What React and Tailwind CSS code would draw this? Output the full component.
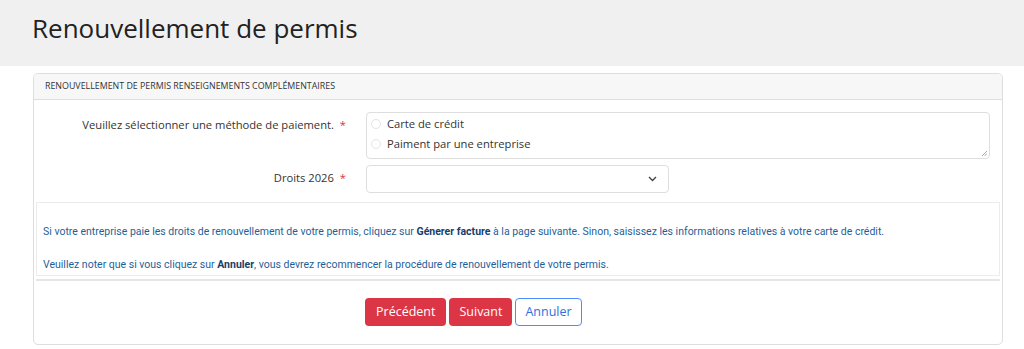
import React from "react";

const P = { fontFamily: '"Open Sans", "DejaVu Sans", sans-serif' };
const R = { fontFamily: 'Roboto, "Liberation Sans", sans-serif' };

export default function App() {
  return (
    <div className="w-[1024px] h-[349px] bg-white overflow-hidden" style={P}>
      <div className="h-[66px] bg-[#f0f0f0] pl-[32px] pt-[10px]">
        <h1 className="text-[26px] leading-[36px] text-[#222]">Renouvellement de permis</h1>
      </div>
      <div className="mx-[33px] mt-[7px] border border-[#dedede] rounded-[5px] w-[970px]">
        <div className="h-[26px] bg-[#f7f7f7] border-b border-[#dedede] pl-[11px] flex items-center rounded-t-[5px]">
          <span className="text-[8.85px] text-[#333] uppercase">Renouvellement de permis renseignements complémentaires</span>
        </div>
        <div className="pt-[12px]">
          <div className="flex">
            <div className="w-[312px] text-right text-[11.2px] text-[#333] pt-[5px]">
              Veuillez sélectionner une méthode de paiement. <span className="text-[#dc3545] ml-[3px]">*</span>
            </div>
            <div className="ml-[20px] w-[624px] h-[47px] border border-[#dedede] rounded-[4px] relative pt-[1px] pl-[4px]">
              <label className="flex items-center h-[20px] text-[11.2px] text-[#333]">
                <span className="w-[10px] h-[10px] rounded-full border border-[#e4e4e4] mr-[6px]"></span>
                Carte de crédit
              </label>
              <label className="flex items-center h-[20px] text-[11.2px] text-[#333]">
                <span className="w-[10px] h-[10px] rounded-full border border-[#e4e4e4] mr-[6px]"></span>
                Paiment par une entreprise
              </label>
              <svg className="absolute right-[2px] bottom-[2px]" width="6" height="6" viewBox="0 0 6 6">
                <path d="M1 6 L6 1 M3.5 6 L6 3.5" stroke="#999" strokeWidth="0.8" />
              </svg>
            </div>
          </div>
          <div className="flex mt-[6px]">
            <div className="w-[312px] text-right text-[11.2px] text-[#333] pt-[5px]">
              Droits 2026 <span className="text-[#dc3545] ml-[3px]">*</span>
            </div>
            <div className="ml-[20px] w-[303px] h-[28px] border border-[#dedede] rounded-[4px] flex items-center justify-end pr-[11px]">
              <svg width="9" height="6" viewBox="0 0 9 6">
                <path d="M1 1 L4.5 4.5 L8 1" stroke="#444" strokeWidth="1.4" fill="none" />
              </svg>
            </div>
          </div>
          <div className="mx-[2px] mt-[9px] border border-[#ececec] h-[74px] pl-[6px] text-[#1f5f99] text-[10.5px]" style={R}>
            <p className="mt-[21px]">Si votre entreprise paie les droits de renouvellement de votre permis, cliquez sur <b className="text-[#173e6b]">Génerer facture</b> à la page suivante. Sinon, saisissez les informations relatives à votre carte de crédit.</p>
            <p className="mt-[17px]">Veuillez noter que si vous cliquez sur <b className="text-[#173e6b]">Annuler</b>, vous devrez recommencer la procédure de renouvellement de votre permis.</p>
          </div>
          <div className="mx-[2px] mt-[3px] h-[2px] bg-[#e6e6e6]"></div>
          <div className="flex gap-[3px] pt-[17px] pb-[18px] pl-[331px]">
            <button className="h-[28px] px-[11px] rounded-[4px] bg-[#dc3545] text-white text-[12.5px]">Précédent</button>
            <button className="h-[28px] px-[10px] rounded-[4px] bg-[#dc3545] text-white text-[12.5px]">Suivant</button>
            <button className="h-[28px] px-[9px] rounded-[4px] border border-[#4d8dfb] text-[#2f6fe0] text-[12.5px] bg-white">Annuler</button>
          </div>
        </div>
      </div>
    </div>
  );
}
